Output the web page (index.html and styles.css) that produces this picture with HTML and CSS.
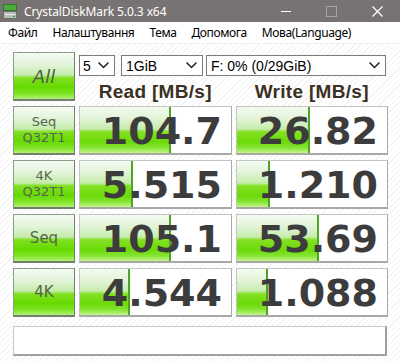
FILE: index.html
```html
<!DOCTYPE html>
<html>
<head>
<meta charset="utf-8">
<link rel="stylesheet" href="styles.css">
</head>
<body>
<div class="titlebar">
  <svg class="appicon" width="14" height="15" viewBox="0 0 14 15">
    <rect x="0.5" y="0.5" width="13" height="6" fill="#4caa3c" stroke="#2f7a28"/>
    <rect x="0.5" y="7.5" width="13" height="7" fill="#b8bcb8" stroke="#6a706a"/>
    <rect x="2" y="10" width="10" height="1" fill="#e8ece8"/>
    <rect x="10" y="12" width="2" height="1" fill="#3a3"/>
  </svg>
  <span class="title">CrystalDiskMark 5.0.3 x64</span>
  <div class="controls">
    <span class="ctl min"></span>
    <span class="ctl max"></span>
    <svg class="ctl close" width="11" height="11" viewBox="0 0 11 11"><path d="M0.5 0.5L10.5 10.5M10.5 0.5L0.5 10.5" stroke="#fff" stroke-width="1.2"/></svg>
  </div>
</div>
<div class="menubar">
  <span class="mi">Файл</span>
  <span class="mi">Налаштування</span>
  <span class="mi">Тема</span>
  <span class="mi">Допомога</span>
  <span class="mi">Мова(Language)</span>
</div>
<div class="main">
  <div class="grid">
    <div class="btn all">All</div>
    <div class="top">
      <div class="selects">
        <div class="sel s1"><span>5</span><svg width="11" height="7" viewBox="0 0 11 7"><path d="M0.5 0.5L5.5 5.5L10.5 0.5" fill="none" stroke="#222" stroke-width="1.5"/></svg></div>
        <div class="sel s2"><span>1GiB</span><svg width="11" height="7" viewBox="0 0 11 7"><path d="M0.5 0.5L5.5 5.5L10.5 0.5" fill="none" stroke="#222" stroke-width="1.5"/></svg></div>
        <div class="sel s3"><span>F: 0% (0/29GiB)</span><svg width="11" height="7" viewBox="0 0 11 7"><path d="M0.5 0.5L5.5 5.5L10.5 0.5" fill="none" stroke="#222" stroke-width="1.5"/></svg></div>
      </div>
      <div class="heads">
        <div class="head">Read [MB/s]</div>
        <div class="head">Write [MB/s]</div>
      </div>
    </div>

    <div class="btn lbl">Seq<br>Q32T1</div>
    <div class="val"><div class="fill" style="width:60.4%"></div><div class="num">104.7</div></div>
    <div class="val"><div class="fill" style="width:48.6%"></div><div class="num">26.82</div></div>

    <div class="btn lbl">4K<br>Q32T1</div>
    <div class="val"><div class="fill" style="width:34.8%"></div><div class="num">5.515</div></div>
    <div class="val"><div class="fill" style="width:21.7%"></div><div class="num">1.210</div></div>

    <div class="btn lbl one">Seq</div>
    <div class="val"><div class="fill" style="width:60.4%"></div><div class="num">105.1</div></div>
    <div class="val"><div class="fill" style="width:54.6%"></div><div class="num">53.69</div></div>

    <div class="btn lbl one">4K</div>
    <div class="val"><div class="fill" style="width:33.2%"></div><div class="num">4.544</div></div>
    <div class="val"><div class="fill" style="width:20.7%"></div><div class="num">1.088</div></div>
  </div>
  <div class="comment"></div>
</div>
</body>
</html>
```
FILE: styles.css
```css
html, body {
  margin: 0;
  padding: 0;
}
body {
  width: 400px;
  height: 361px;
  overflow: hidden;
  background: #fff;
  font-family: "Liberation Sans", Arial, sans-serif;
}
.titlebar {
  height: 22px;
  background: #787372;
  display: flex;
  align-items: center;
  color: #fff;
}
.appicon {
  margin-left: 3px;
  margin-right: 7px;
}
.title {
  font-family: "Noto Sans", sans-serif;
  font-size: 12px;
  letter-spacing: -0.1px;
}
.controls {
  margin-left: auto;
  display: flex;
  align-items: center;
  height: 22px;
}
.ctl {
  display: block;
}
.min {
  width: 10px;
  height: 1px;
  background: #fff;
  margin-right: 35px;
}
.max {
  width: 9px;
  height: 9px;
  border: 1px solid #a8a4a3;
  margin-right: 35px;
}
.close {
  margin-right: 17px;
}
.menubar {
  height: 21px;
  display: flex;
  align-items: center;
  background: #fff;
  font-family: "Noto Sans", sans-serif;
  font-size: 12px;
  letter-spacing: -0.4px;
  color: #000;
  padding-left: 8px;
  border-bottom: 1px solid #f0f0f0;
}
.mi {
  margin-right: 15px;
}
.main {
  height: 317px;
  padding: 8px 13px 0 13px;
  background: repeating-linear-gradient(135deg, #ffffff 0px, #ffffff 3px, #f3f3f3 3px, #f3f3f3 4px);
}
.grid {
  display: grid;
  grid-template-columns: 62px 153px 152px;
  grid-auto-rows: 49px;
  column-gap: 4px;
  row-gap: 5px;
}
.btn {
  box-sizing: border-box;
  border: 1px solid #8c9c8a;
  border-right-color: #728070;
  border-bottom: 2px solid #728070;
  background: linear-gradient(to bottom, #f6fbf4 0%, #e2f4da 25%, #c4ecaa 48%, #80e020 54%, #66da00 75%, #7ee424 88%, #b4f070 100%);
  color: #55654f;
  display: flex;
  align-items: center;
  justify-content: center;
  text-align: center;
}
.all {
  font-family: "DejaVu Sans", sans-serif;
  font-style: italic;
  font-size: 18px;
  color: #4f5f4b;
}
.lbl {
  font-family: "DejaVu Sans", sans-serif;
  font-size: 13px;
  line-height: 16px;
}
.one {
  font-size: 15px;
}
.top {
  grid-column: 2 / 4;
  display: flex;
  flex-direction: column;
}
.selects {
  display: flex;
  margin-top: 3px;
  height: 21px;
}
.sel {
  box-sizing: border-box;
  height: 21px;
  border: 1px solid #7a7a7a;
  background: #fff;
  display: flex;
  align-items: center;
  justify-content: space-between;
  padding: 0 5px 0 3px;
  font-size: 14px;
  color: #000;
}
.s1 { width: 36px; margin-right: 6px; }
.s2 { width: 82px; margin-right: 3px; padding-left: 4px; }
.s3 { width: 180px; padding-left: 4px; }
.heads {
  display: flex;
  column-gap: 4px;
  margin-top: 5px;
}
.head {
  flex: 1;
  text-align: center;
  font-weight: bold;
  font-size: 19px;
  color: #3b3024;
  letter-spacing: 0.3px;
}
.val {
  box-sizing: border-box;
  border: 1px solid #c4c4c4;
  border-right-color: #a8a8a8;
  border-bottom: 2px solid #a8a8a8;
  background: #fff;
  display: grid;
  grid-template: 1fr / 1fr;
}
.fill {
  grid-area: 1 / 1;
  height: 100%;
  box-sizing: border-box;
  border-right: 2px solid #4ea426;
  background: linear-gradient(to bottom, #f4faf0 0%, #e2f4d8 25%, #c6ecac 48%, #84e024 54%, #6cda08 76%, #84e432 88%, #c4f48a 100%);
}
.num {
  grid-area: 1 / 1;
  align-self: center;
  justify-self: end;
  padding-right: 9px;
  font-family: "DejaVu Sans", sans-serif;
  font-weight: bold;
  font-size: 38px;
  line-height: 40px;
  color: #3c3c3c;
  margin-top: 1px;
}
.comment {
  box-sizing: border-box;
  margin-top: 9px;
  width: 374px;
  height: 30px;
  background: #fff;
  border: 1px solid #c8c8c8;
  border-right: 2px solid #a0a0a0;
  border-bottom: 2px solid #a0a0a0;
}
```
